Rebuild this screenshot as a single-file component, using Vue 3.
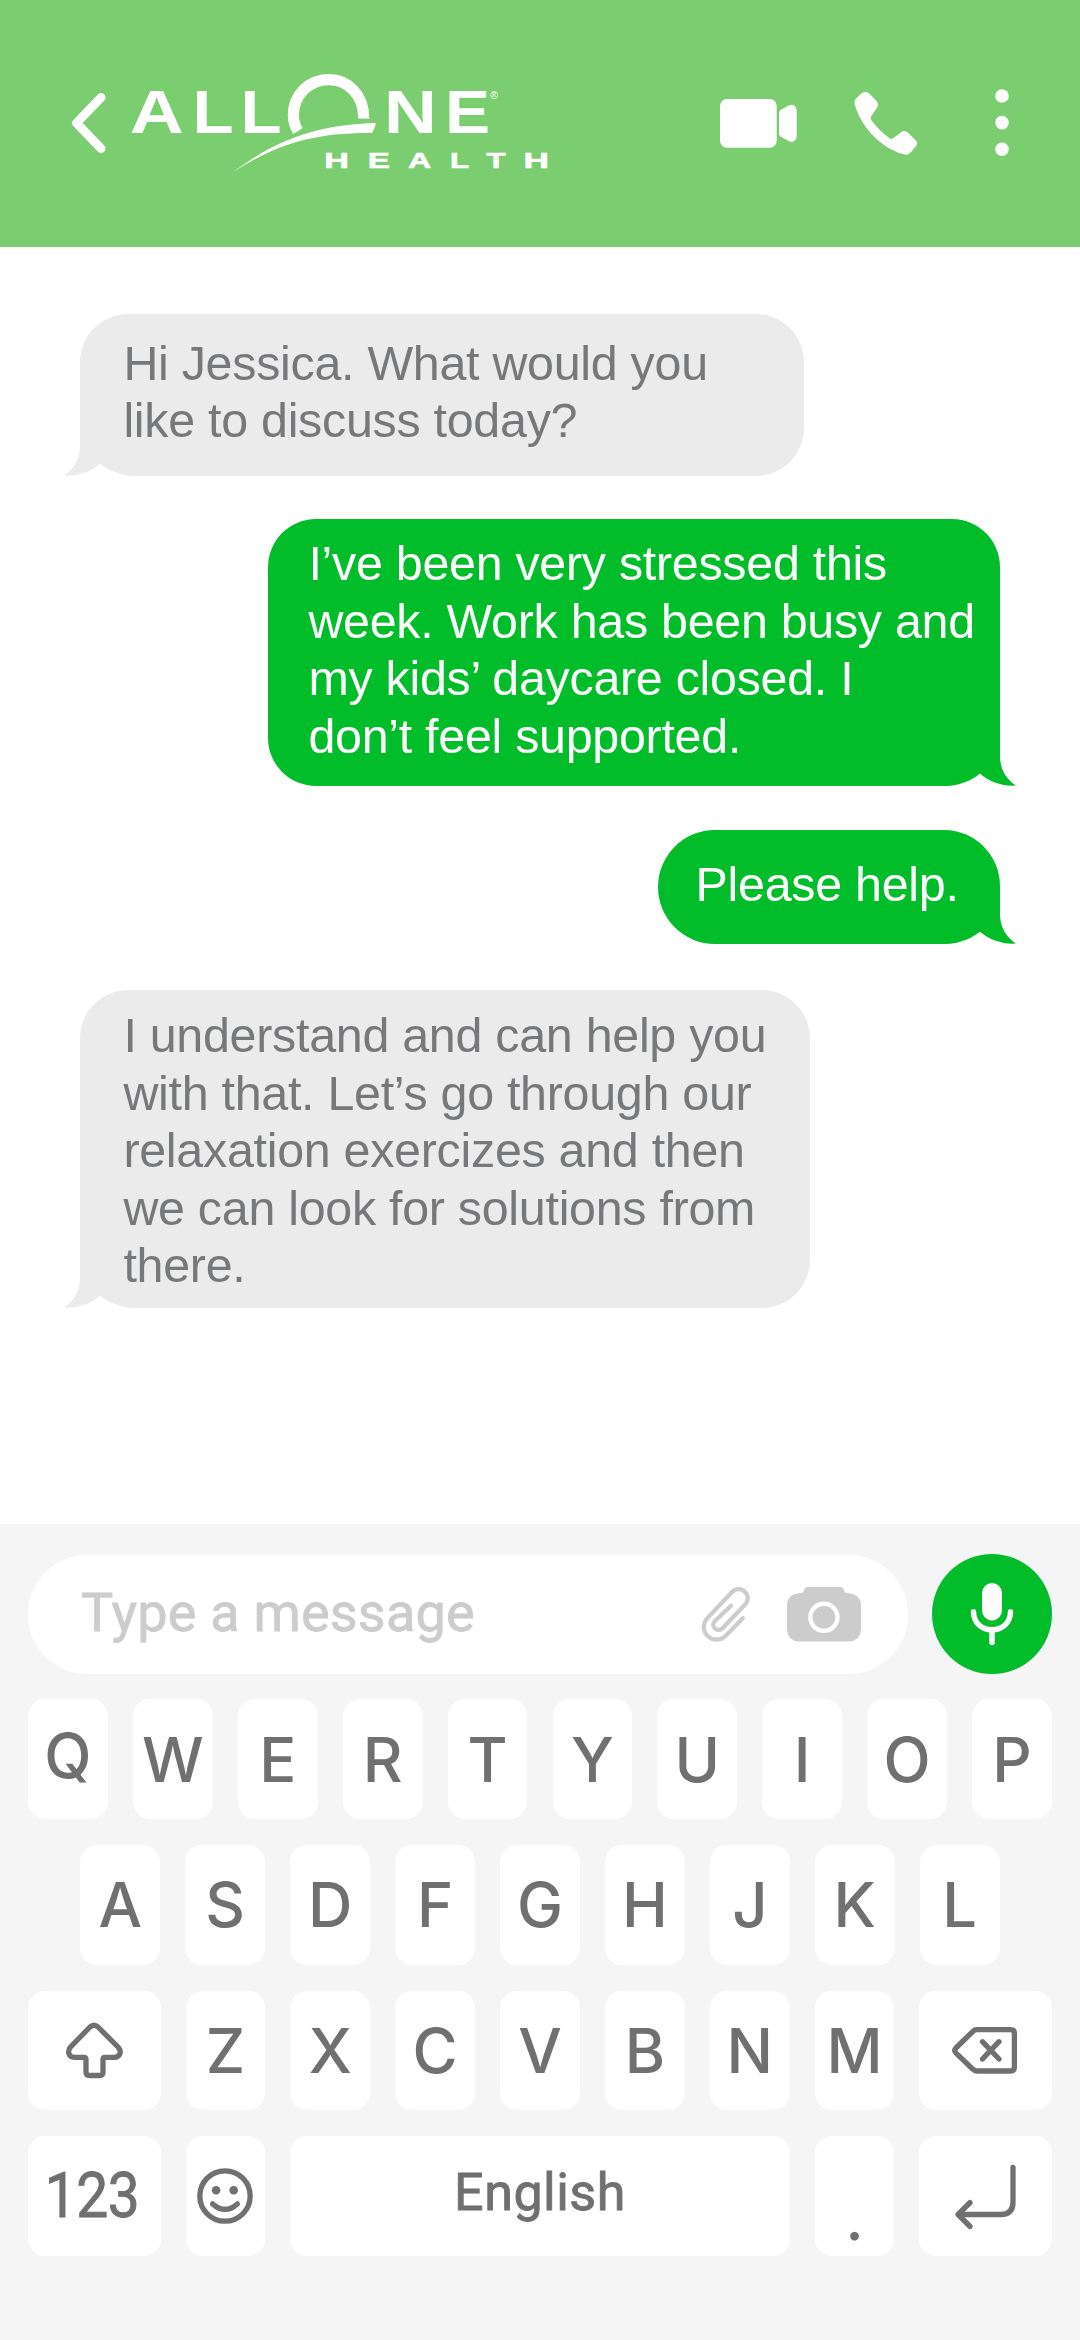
<template>
  <div class="phone">
    <header class="header">
      <svg class="icon-back" viewBox="0 0 36 62" aria-label="Back">
        <path d="M30 5.5 L5.5 31 L30 56.5" />
      </svg>

      <svg class="logo" viewBox="128 70 424 108" role="img" aria-label="AllOne Health">
        <text
          v-for="(glyph, i) in logoTop"
          :key="`top-${i}`"
          class="logo-top"
          :transform="`translate(${glyph.x} 134) scale(${glyph.stretch} 1)`"
        >{{ glyph.char }}</text>
        <path
          class="logo-ring"
          d="M298 132 C295 127.5 293.4 122 293.4 116 C293.4 96 309 80.7 328.8 80.7 C348.6 80.7 364 96.5 363.7 119.6"
        />
        <path
          class="logo-swoosh"
          d="M232.8 173.3 C277 140 318 125.5 375.9 124 Q375 129.5 372 134 C312 133.5 275 146 232.8 173.3 Z"
        />
        <text
          v-for="(glyph, i) in logoBottom"
          :key="`bottom-${i}`"
          class="logo-bottom"
          :transform="`translate(${glyph.x} 168.7) scale(${glyph.stretch} 1)`"
        >{{ glyph.char }}</text>
        <text class="logo-mark" x="490.2" y="100">®</text>
      </svg>

      <div class="header-actions">
        <svg class="icon-video" viewBox="0 0 77 49" aria-label="Video call">
          <rect x="0" y="0" width="56.7" height="48.7" rx="7" />
          <path d="M59 14 Q59 12 60.5 11 L69 6.3 Q71.5 5.2 74 6.3 Q76.7 8 76.7 11 V37.5 Q76.7 40.5 74 42.2 Q71.5 43.4 69 42.2 L60.5 37.5 Q59 36.5 59 34.5 Z" />
        </svg>
        <svg class="icon-phone" viewBox="0 0 200 200" aria-label="Call">
          <path d="M26 10 Q37 2 48 10 L70 32 Q79 43 71 55 L55 78 Q51 84 55 90 Q78 123 109 144 Q115 149 121 144 L144 127 Q155 119 165 128 L188 151 Q196 160 189 169 L172 188 Q164 197 152 193 C78 173 20 102 5 42 Q3 31 10 25 Z" />
        </svg>
        <svg class="icon-more" viewBox="0 0 14 68" aria-label="More">
          <circle cx="7" cy="7" r="6.8" />
          <circle cx="7" cy="33.6" r="6.8" />
          <circle cx="7" cy="60.3" r="6.8" />
        </svg>
      </div>
    </header>

    <main class="chat">
      <div
        v-for="message in messages"
        :key="message.id"
        class="bubble"
        :class="[`bubble--${message.from}`, `bubble--${message.size}`]"
      >
        <p class="bubble-text">{{ message.text }}</p>
        <svg class="bubble-tail" viewBox="0 -10 56 56" aria-hidden="true">
          <path d="M16 -10 V16 C16 29 10 39 0 45.6 C13 46.4 27 42 36.7 33 L56 20 V-10 Z" />
        </svg>
      </div>
    </main>

    <section class="panel">
      <div class="composer">
        <div class="input">
          <span class="placeholder">Type a message</span>
          <svg class="icon-clip" viewBox="0 0 50 57" aria-label="Attach">
            <path d="M42.8 32.3 L25.5 50 C20.5 54.8 12.5 54.8 7.6 50 C2.6 45 2.6 36.8 7.6 31.9 L32 6 C35.6 2.2 41.4 2.2 44.9 5.8 C48.7 9.5 48.7 15 44.9 18.8 L22.5 42.3 C20.3 44.5 16.8 44.5 14.7 42.3 C12.6 40.2 12.8 37.2 14.7 35.2 L31 19.7" />
          </svg>
          <svg class="icon-camera" viewBox="0 0 74 55" aria-label="Camera">
            <path d="M17 3.5 Q17.3 0 20.5 0 H53.5 Q56.7 0 57 3.5 Q57.2 6 60 6 Q74 7 74 19 V41 Q74 54.5 60.5 54.5 H13.5 Q0 54.5 0 41 V19 Q0 7 13 6 Q17 6 17 3.5 Z" />
            <circle cx="36.9" cy="30.3" r="13.6" />
          </svg>
        </div>
        <button class="mic" type="button" aria-label="Record">
          <svg viewBox="0 0 120 120">
            <rect x="50" y="29" width="20" height="37.4" rx="10" />
            <path d="M41.5 57.6 C41.5 69 50 75.8 60 75.8 S78.5 69 78.5 57.6 M60 76 V88.6" />
          </svg>
        </button>
      </div>

      <div class="keyboard">
        <div class="row">
          <span v-for="key in 'QWERTYUIOP'" :key="key" class="key" :class="{ 'key--q': key === 'Q' }">{{ key }}</span>
        </div>
        <div class="row row--inset">
          <span v-for="key in 'ASDFGHJKL'" :key="key" class="key">{{ key }}</span>
        </div>
        <div class="row">
          <span class="key key--wide">
            <svg class="icon-shift" viewBox="0 0 60 60" aria-label="Shift">
              <path d="M26 7 Q30 3.4 34 7 L54 27 Q57 30.5 56 33.5 Q54.5 37.3 50.5 37.3 H41 Q39 37.3 39 39.3 V52 Q39 55.5 35.5 55.5 H25.5 Q22 55.5 22 52 V39.3 Q22 37.3 20 37.3 H10.5 Q6 37.3 4.8 33.5 Q4 30 6.5 27 Z" />
            </svg>
          </span>
          <span v-for="key in 'ZXCVBNM'" :key="key" class="key">{{ key }}</span>
          <span class="key key--wide">
            <svg class="icon-delete" viewBox="0 0 70 60" aria-label="Delete">
              <path d="M27 9.7 H60.5 Q64.4 9.7 64.4 13.5 V47 Q64.4 51 60.5 51 H27 Q24.5 51 23 49.3 L5.8 32.8 Q3.6 30.3 5.8 28 L23 11.3 Q24.5 9.7 27 9.7 Z M32.5 21.7 L49 39 M49 21.7 L32.5 39" />
            </svg>
          </span>
        </div>
        <div class="row">
          <span class="key key--wide"><span class="digits">123</span></span>
          <span class="key">
            <svg class="icon-smile" viewBox="0 0 60 60" aria-label="Emoji">
              <circle cx="30" cy="30" r="25.2" />
              <circle class="eye" cx="21.1" cy="24.2" r="4.3" />
              <circle class="eye" cx="38.7" cy="24.2" r="4.3" />
              <path d="M17.7 37.9 Q30 48.8 42.3 37.9" />
            </svg>
          </span>
          <span class="key key--space">English</span>
          <span class="key key--dot">.</span>
          <span class="key key--wide">
            <svg class="icon-enter" viewBox="0 0 70 70" aria-label="Enter">
              <path d="M63 6.3 V41 Q63 53.5 51 53.5 H9 M20.1 41.5 L8 53.5 L20.1 65.5" />
            </svg>
          </span>
        </div>
      </div>
    </section>
  </div>
</template>

<script setup>
const logoTop = [
  { char: 'A', x: 129.8, stretch: 1.235 },
  { char: 'L', x: 192.5, stretch: 1.11 },
  { char: 'L', x: 240.4, stretch: 1.11 },
  { char: 'N', x: 383.9, stretch: 1.206 },
  { char: 'E', x: 444.9, stretch: 1.116 }
];

const logoBottom = [
  { char: 'H', x: 324.2, stretch: 1.51 },
  { char: 'E', x: 367.7, stretch: 1.468 },
  { char: 'A', x: 408, stretch: 1.42 },
  { char: 'L', x: 450.1, stretch: 1.384 },
  { char: 'T', x: 486.4, stretch: 1.379 },
  { char: 'H', x: 523.5, stretch: 1.56 }
];

const messages = [
  {
    id: 1,
    from: 'in',
    size: 'two',
    text: 'Hi Jessica. What would you\nlike to discuss today?'
  },
  {
    id: 2,
    from: 'out',
    size: 'four',
    text: 'I’ve been very stressed this\nweek. Work has been busy and\nmy kids’ daycare closed. I\ndon’t feel supported.'
  },
  {
    id: 3,
    from: 'out',
    size: 'one',
    text: 'Please help.'
  },
  {
    id: 4,
    from: 'in',
    size: 'five',
    text: 'I understand and can help you\nwith that. Let’s go through our\nrelaxation exercizes and then\nwe can look for solutions from\nthere.'
  }
];
</script>

<style>
body {
  margin: 0;
  background: #fff;
}
</style>

<style scoped>
.phone {
  display: flex;
  flex-direction: column;
  width: 1080px;
  height: 2340px;
  overflow: hidden;
  background: #fff;
  font-family: Inter, "Liberation Sans", sans-serif;
}

svg {
  display: block;
  flex: none;
}

/* Header */
.header {
  display: flex;
  align-items: center;
  box-sizing: border-box;
  height: 246.7px;
  padding: 0 71px 0 70.5px;
  background: #7bce6f;
}

.icon-back {
  width: 36px;
  height: 62px;
  fill: none;
  stroke: #fff;
  stroke-width: 9;
  stroke-linecap: round;
  stroke-linejoin: round;
}

.logo {
  width: 424px;
  height: 108px;
  margin-left: 21.5px;
  fill: #fff;
  font-family: "Liberation Sans", sans-serif;
}

.logo-top {
  font-size: 60.6px;
  font-weight: 700;
}

.logo-bottom {
  font-size: 22.6px;
  font-weight: 700;
  stroke: #fff;
  stroke-width: 0.6;
}

.logo-mark {
  font-size: 10.5px;
}

.logo-ring {
  fill: none;
  stroke: #fff;
  stroke-width: 11.2;
}

.header-actions {
  display: flex;
  align-items: center;
  margin-left: auto;
  fill: #fff;
}

.icon-video {
  width: 77px;
  height: 49px;
}

.icon-phone {
  width: 66.7px;
  height: 66.7px;
  margin: 0 75px 0 56.3px;
}

.icon-more {
  width: 14px;
  height: 68px;
}

/* Conversation */
.chat {
  display: flex;
  flex-direction: column;
  align-items: flex-start;
  box-sizing: border-box;
  height: 1277.3px;
  padding: 67.3px 80px 0;
}

.bubble {
  position: relative;
  box-sizing: border-box;
  border-radius: 48px;
}

.bubble-text {
  margin: 0;
  font-family: "Liberation Sans", Arial, sans-serif;
  font-size: 48.4px;
  line-height: 57.5px;
  letter-spacing: -0.28px;
  white-space: pre;
}

.bubble--in {
  border-bottom-left-radius: 55px;
  background: #ebebeb;
  color: #77787a;
  fill: #ebebeb;
}

.bubble--out {
  align-self: flex-end;
  border-bottom-right-radius: 55px;
  background: #00bd29;
  color: #fff;
  fill: #00bd29;
}

.bubble--two {
  width: 723.5px;
  height: 161.7px;
  padding: 20.6px 0 0 43.4px;
}

.bubble--four {
  width: 731.6px;
  height: 266.7px;
  margin-top: 43.3px;
  padding: 16.3px 0 0 40px;
}

.bubble--one {
  width: 342.4px;
  height: 114.3px;
  margin-top: 44.3px;
  padding: 26.3px 0 0 38px;
  border-top-left-radius: 57px;
  border-top-right-radius: 56px;
  border-bottom-left-radius: 57px;
}

.bubble--five {
  width: 729.7px;
  height: 318.3px;
  margin-top: 45.4px;
  padding: 17.6px 0 0 43.4px;
}

.bubble-tail {
  position: absolute;
  bottom: 0;
  left: -16px;
  width: 56px;
  height: 56px;
}

.bubble--out .bubble-tail {
  right: -16px;
  left: auto;
  transform: scaleX(-1);
}

/* Composer */
.panel {
  flex: 1;
  padding: 30.3px 28px 0;
  background: #f5f5f5;
}

.composer {
  display: flex;
  justify-content: space-between;
  align-items: center;
}

.input {
  display: flex;
  align-items: center;
  box-sizing: border-box;
  width: 879.5px;
  height: 119.4px;
  padding: 0 46.9px 0 53px;
  border-radius: 60px;
  background: #fff;
}

.placeholder {
  flex: 1;
  position: relative;
  top: -2px;
  color: #ccc;
  font-family: Roboto, sans-serif;
  font-size: 54px;
  font-weight: 400;
  letter-spacing: 0.2px;
  white-space: nowrap;
  -webkit-text-stroke: 0.8px #ccc;
}

.icon-clip {
  width: 50px;
  height: 57px;
  margin-right: 36.9px;
  fill: none;
  stroke: #ccc;
  stroke-width: 4.2;
  stroke-linecap: round;
  stroke-linejoin: round;
}

.icon-camera {
  width: 74px;
  height: 55px;
  fill: #ccc;
}

.icon-camera circle {
  stroke: #fff;
  stroke-width: 4.4;
}

.mic {
  width: 120px;
  height: 120px;
  padding: 0;
  border: 0;
  border-radius: 50%;
  background: #00bd29;
}

.mic svg {
  width: 120px;
  height: 120px;
  fill: #fff;
}

.mic path {
  fill: none;
  stroke: #fff;
  stroke-width: 5.4;
  stroke-linecap: round;
}

/* Keyboard */
.keyboard {
  display: flex;
  flex-direction: column;
  gap: 25.9px;
  margin-top: 25.2px;
}

.row {
  display: flex;
  justify-content: space-between;
}

.row--inset {
  padding: 0 52.4px;
}

.key {
  display: flex;
  align-items: center;
  justify-content: center;
  box-sizing: border-box;
  width: 79.8px;
  height: 119.7px;
  border-radius: 17px;
  background: #fff;
  color: #707070;
  font-size: 61.5px;
  font-weight: 500;
  line-height: 1;
}

.key--q {
  padding-bottom: 8px;
}

.key--wide {
  width: 132.5px;
}

.digits {
  margin-right: 4px;
  font-family: Roboto, sans-serif;
  font-size: 62.5px;
  font-weight: 400;
  letter-spacing: -0.5px;
  transform: scaleX(0.91);
  -webkit-text-stroke: 0.9px #707070;
}

.key--space {
  width: 499.4px;
  padding-bottom: 7px;
  font-family: Roboto, sans-serif;
  font-size: 52px;
  font-weight: 400;
  letter-spacing: 0.5px;
  -webkit-text-stroke: 0.9px #707070;
}

.key--dot {
  padding-top: 38px;
  font-family: Lato, sans-serif;
  font-size: 66px;
}

.key svg {
  fill: none;
  stroke: #707070;
  stroke-width: 5.3;
  stroke-linecap: round;
  stroke-linejoin: round;
}

.icon-shift,
.icon-smile {
  width: 60px;
  height: 60px;
}

.icon-smile .eye {
  fill: #707070;
  stroke: none;
}

.icon-delete {
  width: 70px;
  height: 60px;
  margin-right: 2px;
}

.icon-enter {
  width: 70px;
  height: 70px;
  margin-right: 2px;
}
</style>
